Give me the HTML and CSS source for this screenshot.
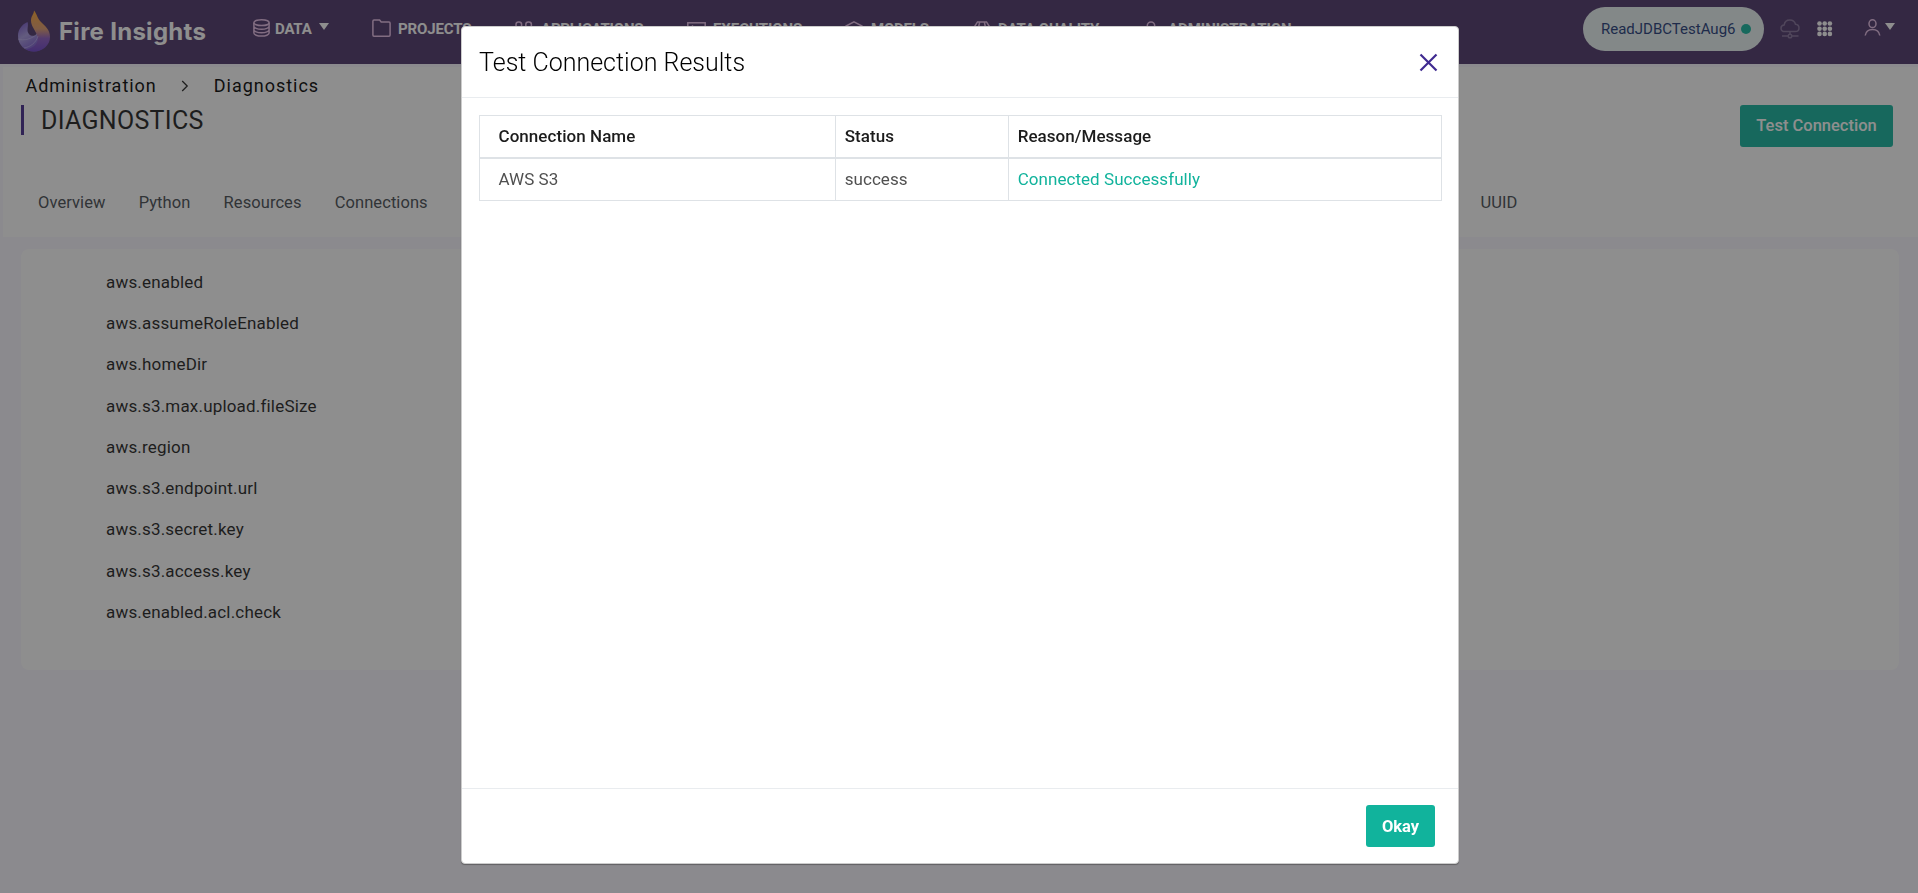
FILE: index.html
```
<!DOCTYPE html>
<html lang="en">
<head>
<meta charset="utf-8">
<title>Fire Insights - Diagnostics</title>
<link rel="stylesheet" href="styles.css">
</head>
<body>
<header class="topbar">
  <div class="brand">
    <svg class="brand-mark" width="34" height="42" viewBox="0 0 34 42">
      <defs>
        <linearGradient id="flame" x1="0" y1="0" x2="0" y2="1">
          <stop offset="0" stop-color="#ffa52d"/><stop offset=".45" stop-color="#e09a6c"/><stop offset=".68" stop-color="#8b58c0"/><stop offset="1" stop-color="#6a3fc8"/>
        </linearGradient>
        <linearGradient id="drop" x1="0" y1="0" x2=".6" y2="1">
          <stop offset="0" stop-color="#6a46c4"/><stop offset=".45" stop-color="#a99ae0"/><stop offset="1" stop-color="#6a48c8"/>
        </linearGradient>
      </defs>
      <path d="M10.500 12C4 15 1 20 1 26C1 35 8 41.500 17 41.500C25 41.500 30 36 30 30C26 32 22 29 20.500 24C16 28 10.500 25 10.500 20C10.500 17 11.500 14 10.500 12Z" fill="url(#drop)"/>
      <path d="M17 0.500C20 4 20 8 24 12C28 16.500 33 19 33 27C33 35 26 41.500 17 41.500C14 41.500 11 40.500 9 39.500C18 38 22 32 20.500 27C19 20 14 17 14 10.500C14 6 17 4 17 0.500Z" fill="url(#flame)"/>
      <path d="M1 29C7 31 15 29 20 24M7 38C13 37 19 33 21 26" fill="none" stroke="#c6bcf0" stroke-width="1" opacity=".55"/>
    </svg>
    <span class="brand-name">Fire Insights</span>
  </div>
  <nav class="menu">
    <a class="menu-item">
      <svg class="ico" width="17" height="18" viewBox="0 0 17 18"><ellipse cx="8.500" cy="3.700" rx="7.600" ry="2.900"/><path d="M.9 3.700V14c0 1.700 3.400 3.100 7.600 3.100s7.600-1.400 7.600-3.100V3.700M.9 7.200c0 1.700 3.400 3.100 7.600 3.100s7.600-1.400 7.600-3.100M.9 10.700c0 1.700 3.400 3.100 7.600 3.100s7.600-1.400 7.600-3.100"/></svg>
      <span class="menu-text menu-text-data">DATA</span><i class="caret"></i>
    </a>
    <a class="menu-item">
      <svg class="ico" width="19" height="18" viewBox="0 0 19 18"><path d="M.9 16V2.200Q.9 1 2 1H7.600L9.200 3H17Q18.100 3 18.100 4.200V16Q18.100 17.200 17 17.200H2Q.9 17.200 .9 16"/></svg>
      <span class="menu-text">PROJECTS</span>
    </a>
    <a class="menu-item">
      <svg class="ico" width="18" height="18" viewBox="0 0 18 18"><rect x="1" y="2.900" width="5.600" height="6" rx="2.500"/><rect x="10.800" y="2.900" width="5.600" height="6" rx="2.500"/><rect x="1" y="11" width="5.600" height="6" rx="2.500"/><rect x="10.800" y="11" width="5.600" height="6" rx="2.500"/></svg>
      <span class="menu-text menu-text-wide">APPLICATIONS</span>
    </a>
    <a class="menu-item">
      <svg class="ico" width="19" height="18" viewBox="0 0 19 18"><rect x=".8" y="3.800" width="17.400" height="13"/><path d="M5 6.500l3 3-3 3"/></svg>
      <span class="menu-text menu-text-exec">EXECUTIONS</span>
    </a>
    <a class="menu-item">
      <svg class="ico" width="18" height="18" viewBox="0 0 18 18"><path d="M9 2.800l8 4.200v7l-8 4-8-4V7zM1 7l8 4 8-4M9 11v7"/></svg>
      <span class="menu-text menu-text-wide">MODELS</span>
    </a>
    <a class="menu-item">
      <svg class="ico" width="18" height="18" viewBox="0 0 18 18"><path d="M4.500 2.900h9L17 8.500l-8 8.500-8-8.500zM6.700 2.900L5.500 8.500 9 17l3.500-8.500-1.200-5.600M1 8.500h16"/></svg>
      <span class="menu-text menu-text-exec">DATA QUALITY</span>
    </a>
    <a class="menu-item">
      <svg class="ico" width="18" height="18" viewBox="0 0 18 18"><circle cx="8" cy="6.600" r="3.700"/><path d="M1 18c0-8 14-8 14 0"/></svg>
      <span class="menu-text menu-text-admin">ADMINISTRATION</span>
    </a>
  </nav>
  <div class="tools">
    <div class="pill"><span>ReadJDBCTestAug6</span><i class="dot"></i></div>
    <svg class="cloud" width="20" height="20" viewBox="0 0 20 20"><path d="M5 12.600C2.500 12.600 1 11 1 9.200C1 7.200 2.500 6 4.200 5.900C4.600 3 7 1 9.800 1C12.600 1 14.800 2.700 15.500 5.300C17.500 5.500 19 7 19 9C19 11.200 17.500 12.600 15 12.600ZM10 12.600V15.300M2 17H8M12 17H18.500"/><circle cx="10" cy="17" r="1.800"/></svg>
    <svg class="apps" width="16" height="16" viewBox="0 0 16 16"><g id="r"><circle cx="2.500" cy="2.500" r="2.300"/><circle cx="7.700" cy="2.500" r="2.300"/><circle cx="12.900" cy="2.500" r="2.300"/></g><use href="#r" y="5.200"/><use href="#r" y="10.400"/></svg>
    <svg class="ico user" width="17" height="17" viewBox="0 0 17 17"><ellipse cx="8.500" cy="4.700" rx="3.500" ry="3.900"/><path d="M1.200 16.500C2.500 8.500 14.500 8.500 15.800 16.500"/></svg>
    <i class="caret"></i>
  </div>
</header>

<section class="page-head">
  <div class="crumbs"><span>Administration</span>
    <svg width="8" height="12" viewBox="0 0 8 12"><path d="M1.200 1l5 5-5 5"/></svg>
    <span>Diagnostics</span></div>
  <div class="title-row"><h1>DIAGNOSTICS</h1><button class="btn btn-test">Test Connection</button></div>
  <div class="tabs">
    <a>Overview</a><a>Python</a><a>Resources</a><a>Connections</a><a class="tab-last">UUID</a>
  </div>
</section>

<main class="card">
  <ul class="props">
    <li>aws.enabled</li>
    <li>aws.assumeRoleEnabled</li>
    <li>aws.homeDir</li>
    <li>aws.s3.max.upload.fileSize</li>
    <li>aws.region</li>
    <li>aws.s3.endpoint.url</li>
    <li>aws.s3.secret.key</li>
    <li>aws.s3.access.key</li>
    <li>aws.enabled.acl.check</li>
  </ul>
</main>

<div class="backdrop">
  <div class="modal" role="dialog">
    <div class="modal-head">
      <h2>Test Connection Results</h2>
      <svg class="close" width="19" height="19" viewBox="0 0 19 19"><path d="M1.500 1.500l16 16M17.500 1.500l-16 16"/></svg>
    </div>
    <div class="modal-body">
      <table class="results">
        <thead><tr><th class="c-name">Connection Name</th><th class="c-status">Status</th><th>Reason/Message</th></tr></thead>
        <tbody><tr><td class="c-name">AWS S3</td><td>success</td><td class="ok">Connected Successfully</td></tr></tbody>
      </table>
    </div>
    <div class="modal-foot"><button class="btn btn-okay">Okay</button></div>
  </div>
</div>
</body>
</html>
```
FILE: styles.css
```
* { box-sizing: border-box; }
html, body { height: 100%; }
body {
  margin: 0;
  overflow: hidden;
  background: #f8f6ff;
  color: #1c1c1c;
  font: 400 17px/24px Roboto, "Liberation Sans", sans-serif;
  white-space: nowrap;
}
h1, h2, ul { margin: 0; padding: 0; font-weight: 400; }

/* top bar */
.topbar {
  display: flex;
  align-items: flex-start;
  height: 64px;
  background: #4b3369;
  color: #fff;
}
.brand { display: flex; width: 253px; padding: 10px 0 0 17px; }
.brand-name {
  margin: 7px 0 0 8px;
  font: 700 24px/30px Inter, sans-serif;
  letter-spacing: .28px;
}
.menu {
  display: grid;
  grid-template-columns: 119px 143px 172px 158px 128px 170px 165px;
  padding-top: 19px;
}
.menu-item { display: flex; height: 20px; }
.ico { fill: none; stroke: #e6bde6; stroke-width: 1.5; flex: none; }
.menu-text { margin-left: 7px; font: 700 15px/20px Roboto, sans-serif; letter-spacing: -.15px; }
.menu-text-data { margin-left: 5px; letter-spacing: -.2px; }
.menu-text-wide { margin-left: 8px; letter-spacing: -.2px; }
.menu-text-exec { letter-spacing: -.08px; }
.menu-text-admin { margin-left: 7px; letter-spacing: -.05px; }
.caret {
  flex: none;
  width: 0;
  height: 0;
  margin: 4px 0 0 7px;
  border: 5px solid transparent;
  border-top: 7px solid #fff;
  border-bottom: 0;
}
.tools { display: flex; align-items: flex-start; margin-left: auto; padding: 7px 23px 0 0; }
.pill {
  display: flex;
  align-items: center;
  gap: 5px;
  width: 181px;
  height: 44px;
  padding-left: 18px;
  border-radius: 22px;
  background: #e9f3f3;
  color: #213979;
  font-size: 15px;
}
.dot { width: 10px; height: 10px; border-radius: 50%; background: #11b59d; }
.cloud { margin: 12px 0 0 16px; fill: none; stroke: #826e98; stroke-width: 1.5; }
.apps { margin: 14px 0 0 17px; fill: #fff; }
.user { margin: 12px 0 0 31px; }
.user + .caret { margin: 16px 0 0 4px; }

/* page heading */
.page-head { margin: 3px 0 0 3px; height: 170px; background: #fff; }
.crumbs {
  display: flex;
  align-items: center;
  gap: 24.500px;
  height: 38px;
  padding: 0 0 0 22.500px;
  color: #000;
  font-size: 18px;
  letter-spacing: .98px;
}
.crumbs svg { fill: none; stroke: #222; stroke-width: 1.3; }
.title-row { display: flex; justify-content: space-between; padding: 0 25px 0 18px; }
.title-row h1 {
  height: 30px;
  padding-left: 17px;
  border-left: 3px solid #42288c;
  font-size: 25px;
  line-height: 32px;
  letter-spacing: .3px;
}
.btn {
  height: 42px;
  padding: 0;
  border: 0;
  border-radius: 3px;
  background: #11b39c;
  color: #fff;
  font: 500 16.500px/42px Roboto, sans-serif;
}
.btn-test { width: 153px; }
.tabs {
  display: flex;
  gap: 33.200px;
  padding: 44px 0 0 35px;
  color: #444a50;
  font-size: 16.500px;
  letter-spacing: .07px;
}
.tab-last { margin-left: 1019.500px; }

/* properties */
.card {
  margin: 12px 19px 0 21px;
  height: 421px;
  padding-top: 12.800px;
  border-radius: 8px;
  background: #fff;
}
.props { list-style: none; padding-left: 85px; letter-spacing: .18px; }
.props li { height: 41.250px; line-height: 41px; }

/* dialog */
.backdrop {
  position: fixed;
  inset: 0;
  padding-top: 26px;
  background: rgba(29, 29, 29, .5);
}
.modal {
  display: flex;
  flex-direction: column;
  width: 998px;
  height: 838px;
  margin: 0 auto 0 461px;
  border: 1px solid #ccc;
  border-radius: 4px;
  background: #fff;
  box-shadow: 0 1px 1px rgba(0, 0, 0, .3);
}
.modal-head {
  display: flex;
  justify-content: space-between;
  height: 71px;
  padding: 0 20px 0 17px;
  border-bottom: 1px solid #e9ecef;
}
.modal-head h2 { color: #000; font-size: 25px; font-weight: 300; line-height: 71px; }
.close { margin-top: 26px; fill: none; stroke: #3f2a90; stroke-width: 2.200; }
.modal-body { flex: 1; padding: 17px 16px 0 17px; }
.results { width: 963px; table-layout: fixed; border-collapse: collapse; letter-spacing: .05px; }
.results th, .results td { height: 43px; padding: 0 8px 0 8.700px; border: 1px solid #dee2e6; text-align: left; }
.results thead th { height: 42px; border-bottom-width: 2px; font-weight: 500; }
.results td { color: #505050; }
.results .c-name { width: 356px; padding-left: 18.500px; }
.results .c-status { width: 173px; }
.results .ok { color: #11b39c; }
.modal-foot {
  display: flex;
  justify-content: flex-end;
  height: 75px;
  padding: 16px 23px 0 0;
  border-top: 1px solid #e9ecef;
}
.btn-okay { width: 69px; font-weight: 700; line-height: 43px; }
```
